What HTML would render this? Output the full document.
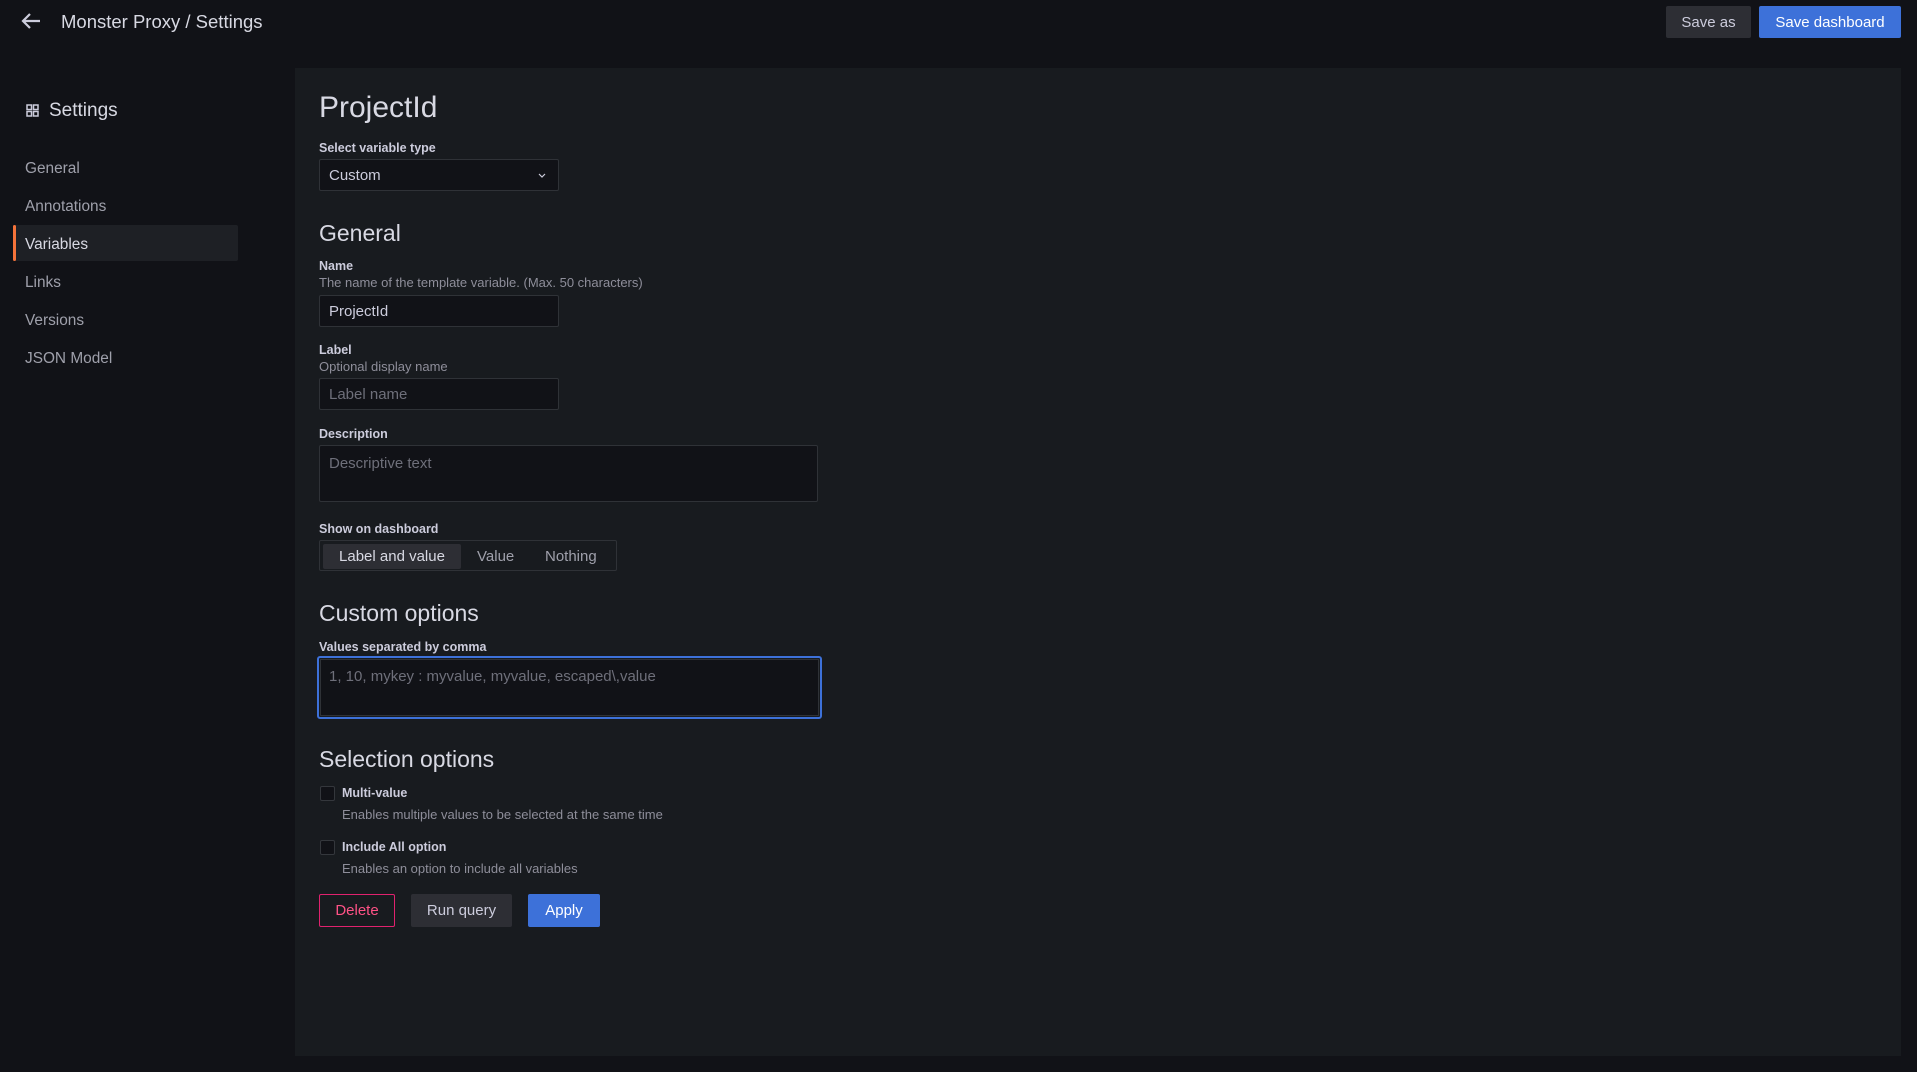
<!DOCTYPE html>
<html><head><style>
*{box-sizing:border-box;margin:0;padding:0}
body{width:1917px;height:1072px;background:#111217;font-family:"Liberation Sans",sans-serif;color:#ccccdc;position:relative;overflow:hidden}
.a{position:absolute;white-space:nowrap}
.btn{position:absolute;border-radius:2px;font-size:15px;display:flex;align-items:center;justify-content:center;font-weight:500}
.lbl{position:absolute;font-size:12.5px;font-weight:bold;color:#ccccdc}
.desc{position:absolute;font-size:13px;color:#8e8e9a}
.inp{position:absolute;background:#111217;border:1px solid #2f3237;border-radius:2px;font-size:15px;padding-left:9px;display:flex;align-items:center}
.nav{position:absolute;left:25px;font-size:15.4px;color:#9fa0ab}
h2{position:absolute;font-weight:normal;font-size:23px;color:#d8d9e3}
.cb{position:absolute;width:15px;height:15px;border:1px solid #34373c;border-radius:2px;background:#111217}
</style></head><body>
<svg class="a" style="left:21px;top:12px" width="20" height="18" viewBox="0 0 20 18"><path d="M19 9H3M9 2L2 9l7 7" stroke="#ccccdc" stroke-width="2.2" fill="none"/></svg>
<div class="a" style="left:61px;top:11px;font-size:18.5px;color:#d8d9e3">Monster Proxy / Settings</div>
<div class="btn" style="left:1666px;top:6px;width:85px;height:32px;background:#2d2e34;color:#ccccdc">Save as</div>
<div class="btn" style="left:1759px;top:6px;width:142px;height:32px;background:#3d71d9;color:#fff">Save dashboard</div>

<svg class="a" style="left:26px;top:104px" width="13" height="13" viewBox="0 0 13 13" fill="none" stroke="#ccccdc" stroke-width="1.5"><rect x="1" y="1" width="4.5" height="4.5"/><rect x="7.5" y="1" width="4.5" height="4.5"/><rect x="1" y="7.5" width="4.5" height="4.5"/><rect x="7.5" y="7.5" width="4.5" height="4.5"/></svg>
<div class="a" style="left:49px;top:100px;font-size:19px;color:#d8d9e3;font-weight:500">Settings</div>
<div class="nav" style="top:160px">General</div>
<div class="nav" style="top:198px">Annotations</div>
<div class="a" style="left:13px;top:225px;width:225px;height:36px;background:#1e2025;border-radius:2px"></div>
<div class="a" style="left:13px;top:225px;width:3px;height:36px;background:#f5733a;border-radius:2px"></div>
<div class="nav" style="top:236px;color:#d8d9e3">Variables</div>
<div class="nav" style="top:274px">Links</div>
<div class="nav" style="top:312px">Versions</div>
<div class="nav" style="top:350px">JSON Model</div>

<div class="a" style="left:295px;top:68px;width:1606px;height:988px;background:#181b1f"></div>
<div class="a" style="left:319px;top:91px;font-size:30px;color:#d8d9e3">ProjectId</div>
<div class="lbl" style="left:319px;top:141px">Select variable type</div>
<div class="inp" style="left:319px;top:159px;width:240px;height:32px">Custom<svg style="position:absolute;right:12px;top:13px" width="8" height="6" viewBox="0 0 8 6"><path d="M1 1l3 3 3-3" stroke="#ccccdc" fill="none" stroke-width="1.2"/></svg></div>
<h2 style="left:319px;top:220px">General</h2>
<div class="lbl" style="left:319px;top:259px">Name</div>
<div class="desc" style="left:319px;top:275px">The name of the template variable. (Max. 50 characters)</div>
<div class="inp" style="left:319px;top:295px;width:240px;height:32px">ProjectId</div>
<div class="lbl" style="left:319px;top:343px">Label</div>
<div class="desc" style="left:319px;top:359px">Optional display name</div>
<div class="inp" style="left:319px;top:378px;width:240px;height:32px;color:#6e6f7a">Label name</div>
<div class="lbl" style="left:319px;top:427px">Description</div>
<div class="inp" style="left:319px;top:445px;width:499px;height:57px;align-items:flex-start;padding-top:9px;color:#6e6f7a">Descriptive text</div>
<div class="lbl" style="left:319px;top:522px">Show on dashboard</div>
<div class="a" style="left:319px;top:540px;width:298px;height:31px;border:1px solid #2f3237;border-radius:2px"></div>
<div class="a" style="left:323px;top:544px;width:138px;height:25px;background:#2d2e34;border-radius:2px;font-size:15px;color:#d8d9e3;display:flex;align-items:center;justify-content:center">Label and value</div>
<div class="a" style="left:477px;top:548px;font-size:15px;color:#9fa0ab">Value</div>
<div class="a" style="left:545px;top:548px;font-size:15px;color:#9fa0ab">Nothing</div>
<h2 style="left:319px;top:600px">Custom options</h2>
<div class="lbl" style="left:319px;top:640px">Values separated by comma</div>
<div class="a" style="left:317px;top:656px;width:505px;height:63px;border:2px solid #3d71d9;border-radius:3px;padding:1px"><div style="background:#111217;width:100%;height:100%;border:1px solid #2f3237;font-size:15px;color:#6e6f7a;padding:8px 0 0 8px">1, 10, mykey : myvalue, myvalue, escaped\,value</div></div>
<h2 style="left:319px;top:746px">Selection options</h2>
<div class="cb" style="left:320px;top:786px"></div>
<div class="a" style="left:342px;top:786px;font-size:12.5px;font-weight:bold;color:#ccccdc">Multi-value</div>
<div class="desc" style="left:342px;top:807px">Enables multiple values to be selected at the same time</div>
<div class="cb" style="left:320px;top:840px"></div>
<div class="a" style="left:342px;top:840px;font-size:12.5px;font-weight:bold;color:#ccccdc">Include All option</div>
<div class="desc" style="left:342px;top:861px">Enables an option to include all variables</div>
<div class="btn" style="left:319px;top:894px;width:76px;height:33px;border:1px solid #e0226e;color:#ff5286">Delete</div>
<div class="btn" style="left:411px;top:894px;width:101px;height:33px;background:#2d2e34;color:#ccccdc">Run query</div>
<div class="btn" style="left:528px;top:894px;width:72px;height:33px;background:#3d71d9;color:#fff">Apply</div>
</body></html>
